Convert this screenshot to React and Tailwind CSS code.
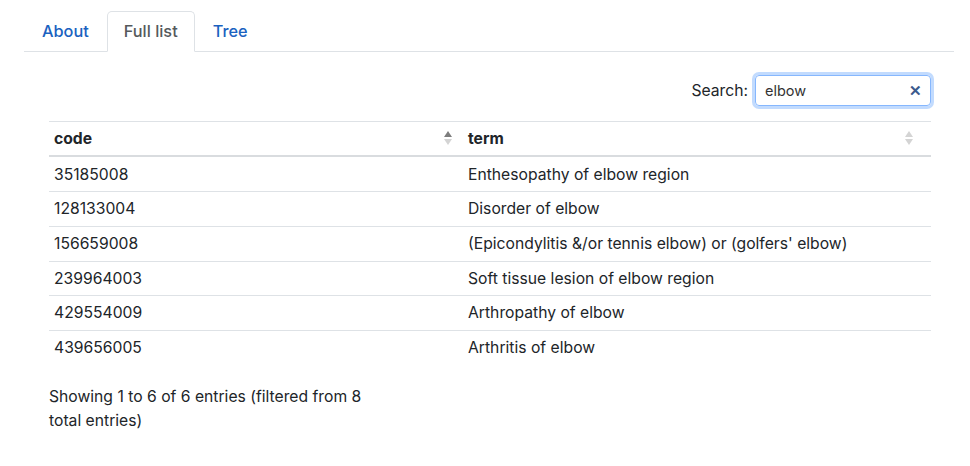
import React from "react";

const rows = [
  ["35185008", "Enthesopathy of elbow region"],
  ["128133004", "Disorder of elbow"],
  ["156659008", "(Epicondylitis &/or tennis elbow) or (golfers' elbow)"],
  ["239964003", "Soft tissue lesion of elbow region"],
  ["429554009", "Arthropathy of elbow"],
  ["439656005", "Arthritis of elbow"],
];

function SortIcon({ active }) {
  return (
    <span className="flex flex-col items-center gap-[2px]">
      <span
        className={`block w-0 h-0 border-l-[4px] border-r-[4px] border-b-[6px] border-l-transparent border-r-transparent ${
          active ? "border-b-[#7d7d7d]" : "border-b-[#d4d4d4]"
        }`}
      />
      <span className="block w-0 h-0 border-l-[4px] border-r-[4px] border-t-[6px] border-l-transparent border-r-transparent border-t-[#d4d4d4]" />
    </span>
  );
}

export default function App() {
  return (
    <div
      className="bg-white text-[#212529] w-[970px] h-[466px] overflow-hidden"
      style={{ fontFamily: "Inter, 'Noto Sans', sans-serif" }}
    >
      <div className="ml-[24px] mr-[16px] pt-[11px]">
        <div className="flex border-b border-[#dee2e6] text-[16.3px] leading-[24px]">
          <div className="px-[17px] py-[7px] font-medium text-[#1a62c0] border border-transparent">About</div>
          <div className="px-[16px] py-[7px] font-medium text-[#55595c] bg-white border border-[#dee2e6] border-b-white rounded-t-[5px] -mb-px">
            Full list
          </div>
          <div className="px-[17px] py-[7px] font-medium text-[#1a62c0] border border-transparent">Tree</div>
        </div>

        <div className="pl-[25px] pr-[23px]">
          <div className="flex justify-end items-center mt-[23px] text-[15.7px]">
            <span className="mr-[7px]">Search:</span>
            <div className="flex items-center w-[176px] h-[31px] border border-[#86b7fe] rounded-[4px] shadow-[0_0_0_3px_rgba(13,110,253,0.25)] pl-[9px] pr-[8px]">
              <span className="flex-1 text-[14.5px] text-[#333]">elbow</span>
              <span className="text-[#3b5a8c] text-[15px] font-bold leading-none">✕</span>
            </div>
          </div>

          <table className="w-full mt-[15px] border-collapse text-[15.7px]">
            <thead>
              <tr className="border-t border-[#dee2e6] border-b-[2px] border-b-[#d9dcdf]">
                <th className="w-[414px] text-left font-bold px-[5px] h-[34px] leading-[21px]">
                  <div className="flex items-center justify-between pr-[6px]">
                    <span>code</span>
                    <SortIcon active />
                  </div>
                </th>
                <th className="text-left font-bold px-[5px] h-[34px] leading-[21px]">
                  <div className="flex items-center justify-between pr-[13px]">
                    <span>term</span>
                    <SortIcon />
                  </div>
                </th>
              </tr>
            </thead>
            <tbody>
              {rows.map(([c, t], i) => (
                <tr key={c} className={i > 0 ? "border-t border-[#dee2e6]" : ""}>
                  <td className={`px-[5px] pb-[6px] leading-[20.7px] ${i === 0 ? "pt-[8px]" : "pt-[7px]"}`}>{c}</td>
                  <td className={`px-[5px] pb-[6px] leading-[20.7px] ${i === 0 ? "pt-[8px]" : "pt-[7px]"}`}>{t}</td>
                </tr>
              ))}
            </tbody>
          </table>

          <p className="w-[330px] mt-[20px] text-[15.7px] leading-[24px]">
            Showing 1 to 6 of 6 entries (filtered from 8 total entries)
          </p>
        </div>
      </div>
    </div>
  );
}
